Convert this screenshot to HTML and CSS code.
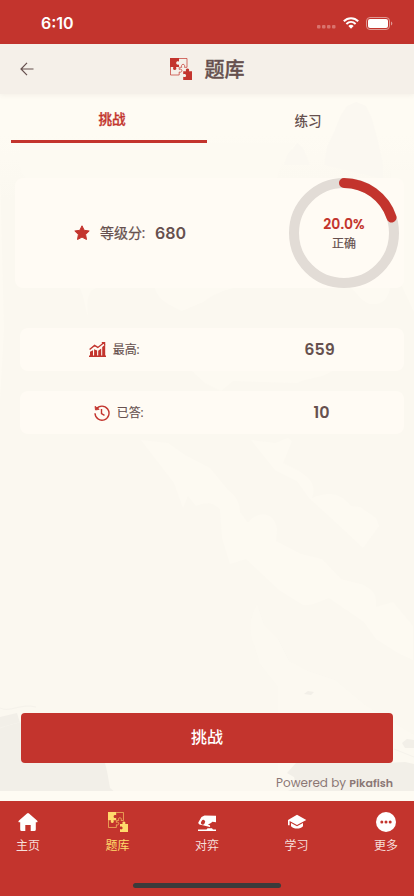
FILE: index.html
```html
<!DOCTYPE html>
<html lang="zh-CN">
<head>
    <meta charset="utf-8">
    <meta name="viewport" content="width=device-width, initial-scale=1">
    <title>题库</title>
    <link rel="stylesheet" href="styles.css">
</head>
<body>
    <!-- Shared icon shapes -->
    <svg class="symbols" width="0" height="0">
        <symbol id="puzzle" viewBox="0 0 22 22">
            <path d="M9 .5h8v8.800h-2.600c.5-1.300.3-3-1.300-3s-1.900 1.700-1.300 3H9.500M.5 9v8h8.700v-3c1.400.6 2.700 0 2.700-1.400s-1.500-1.900-2.700-1.200V9.300" fill="none" stroke="currentColor" stroke-width=".7"/>
            <path d="M0 0h9v3.700C7.700 2.900 6.200 3.500 6.200 5S7.700 7.100 9 6.400V9H6c.9 1.700.1 3-1.300 3s-2.200-1.300-1.300-3H0z" fill="currentColor"/>
            <path d="M13.200 13.300h2.900c-.8-1.600.1-2.800 1.400-2.800s2.200 1.200 1.400 2.800H22V22h-8.800v-3.200c1.600.8 2.900 0 2.900-1.300s-1.300-2.100-2.900-1.300z" fill="currentColor"/>
        </symbol>
    </svg>

    <div class="app">
        <!-- Landscape behind the page -->
        <svg class="scenery" viewBox="0 0 414 706" preserveAspectRatio="none">
            <defs>
                <linearGradient id="mist" x1="0" y1="0" x2="0" y2="1">
                    <stop offset="0" stop-color="#fbf8f0" stop-opacity="0"/>
                    <stop offset=".1" stop-color="#fbf8f0"/>
                    <stop offset="1" stop-color="#fbf8f0"/>
                </linearGradient>
            </defs>
            <rect y="50" width="414" height="656" fill="url(#mist)"/>
            <path d="M324 80l3-18 8-17 6-15 6-9 9-4 10 4 6 13 6 22 5 24v14zM284 80l4-12 5-4 4-6 6 5 7 17z" fill="#fbf8f1"/>
            <g fill="#fdfaf2">
                <path d="M20 58h275l-13 20-5 15H26q-6-5-6-12zM80 203h16c-10 3-9 18-8 30l-5-22zM155 203h78c-11 3-19 6-30 14l-21 9-10-5c-9-5-14-8-17-18zM351 203h39c-3 12-7 17-20 16-9-3-11-9-19-16z"/>
                <path d="M192 286h140c-11 8-24 6-35 12l-64-2-12 10-16-8zM141 355l27 3 17 12 25 13 18 22c9 6 12 15 12 22l8 11c10-14 27-11 29 6l-1 12 25 13 21 5 19 20 20 5c17 7 15 16 15 23l17-5 20 24v34l-15-7-22-14-12-17-35-24c-9 3-16 8-26 7l-24-15-33-31-16 5-8-26-2-29c-8-7-14-7-24-3l-8-10-5 12-9-25z"/>
                <path d="M251 355l24 3 13-5 4 3-9 22 16 8c13 8 17 15 13 27 18-7 28-5 39 8l9 1 16 11 3 8-16 22-19-18-13-12-22-20-12-17-22-11z"/>
                <path d="M390 85l9 49 1 63 14 30V85zM0 85l4 160-4 70z"/>
                <path d="M251 550c-2-14 2-22 6-31l7 21 14 14 11 22 19 10 27 9 30 25 49 30v50H278v-98l-18-23z" opacity=".45"/>
            </g>
            <g fill="#f2efe8">
                <path d="M0 632l17-4 3 10 10 6-4 16 12 1 15 12 52 5 2 8 3 17 7 6 8 7-8 6H0z"/>
                <path d="M304 609l4-3 6 1-3 3zM296 678h89l20-1 9 2v27H310l-9 2-13-2 8-4-2-10-7-4zM402 658l5-4 7 1v8h-9z"/>
            </g>
            <path d="M0 643c15-5 19-5 40-11M0 623c10 5 20-5 36-1M394 664l20 8" fill="none" stroke="#f5f2eb"/>
        </svg>

        <div class="status-bar">
            <span class="time">6:10</span>
            <div class="status-icons">
                <svg width="19" height="4" viewBox="0 0 19 4" fill="#d9736d"><rect width="3.500" height="3.500" rx="1"/><rect x="5" width="3.500" height="3.500" rx="1"/><rect x="10" width="3.500" height="3.500" rx="1"/><rect x="15" width="3.500" height="3.500" rx="1"/></svg>
                <svg class="wifi" width="16" height="12" viewBox="0 0 16 12" fill="none" stroke="#fff" stroke-width="2"><path d="M.8 4.300C4.800.2 11.200.2 15.200 4.300M3.400 7c2.700-2.600 6.500-2.600 9.200 0"/><path d="M5.400 8.900c1.500-1.400 3.700-1.400 5.200 0L8 11.700z" fill="#fff" stroke="none"/></svg>
                <svg width="27" height="13" viewBox="0 0 27 13"><rect x=".5" y=".5" width="23" height="12" rx="3.500" fill="none" stroke="#df9993"/><rect x="2" y="2" width="20" height="9" rx="2" fill="#fff"/><path d="M25 4.500c1.800.7 1.800 3.300 0 4z" fill="#df9993"/></svg>
            </div>
        </div>

        <header class="header">
            <svg class="back" width="14" height="14" viewBox="0 0 14 14" fill="none" stroke="currentColor" stroke-width="1.200"><path d="M13.500 7H1M7 .8L1 7l6 6.200"/></svg>
            <div class="title">
                <svg class="title-icon" width="22" height="22"><use href="#puzzle"/></svg>
                <h1>题库</h1>
            </div>
        </header>

        <div class="tabs">
            <div class="tab active">挑战</div>
            <div class="tab">练习</div>
        </div>

        <main>
            <section class="rating-card">
                <div class="rating">
                    <svg width="16" height="16" viewBox="0 0 16 16" fill="#c3342d"><path d="M8 .8l2.200 4.500 5 .7-3.600 3.500.9 5L8 12.100l-4.500 2.400.9-5L.8 6l5-.7z" stroke="#c3342d" stroke-linejoin="round"/></svg>
                    <span class="rating-label">等级分:</span>
                    <span class="rating-value">680</span>
                </div>
                <div class="progress">
                    <svg viewBox="0 0 110 110" fill="none" stroke-width="10">
                        <circle cx="55" cy="55" r="50" stroke="#e2dcd6"/>
                        <path d="M55 5a50 50 0 0 1 47.550 34.550" stroke="#c3342d" stroke-linecap="round"/>
                    </svg>
                    <div class="progress-text">
                        <strong>20.0%</strong>
                        <span>正确</span>
                    </div>
                </div>
            </section>

            <div class="stat">
                <div class="stat-label">
                    <svg width="17" height="15" viewBox="0 0 17 15"><path d="M0 13.500h17V15H0zM1 9.800l3-1.500v6H1zM5.100 7.300l3 1.200v5.800h-3zM9.200 8.800l3-2.300v7.800h-3zM13.200 5l3-2.500v11.700h-3z" fill="#c3342d"/><path d="M.6 7.600l5-4.200 3.200 2L15 .8M12.800.6h2.800v2.600" fill="none" stroke="#c3342d" stroke-width="1.300"/></svg>
                    <span>最高:</span>
                </div>
                <div class="stat-value">659</div>
            </div>
            <div class="stat answered">
                <div class="stat-label">
                    <svg width="16" height="16" viewBox="0 0 16 16" fill="none" stroke="#c3342d" stroke-width="1.400"><path d="M2.300 4.100A7 7 0 1 1 1 8.300M7.500 4v4.600l3 1.700"/><path d="M1 1.300l.5 3.700 3.700-.7z" fill="#c3342d" stroke-width=".8"/></svg>
                    <span>已答:</span>
                </div>
                <div class="stat-value">10</div>
            </div>
        </main>

        <div class="actions">
            <button class="challenge">挑战</button>
            <div class="powered"><span>Powered by</span> <b>Pikafish</b></div>
        </div>

        <nav class="nav">
            <div class="nav-item">
                <svg width="20" height="20" viewBox="0 0 20 20" fill="currentColor"><path d="M9 1.400q1-.8 2 0l8 7c1 .9.700 1.800-.4 1.800h-.8v7.300q0 1.500-1.500 1.500h-3.600v-6H7.300v6H3.700q-1.500 0-1.500-1.500v-7.300h-.8C.3 10.200 0 9.300 1 8.400z"/></svg>
                <span>主页</span>
            </div>
            <div class="nav-item selected">
                <svg width="20" height="20"><use href="#puzzle"/></svg>
                <span>题库</span>
            </div>
            <div class="nav-item">
                <svg width="20" height="20" viewBox="0 0 20 20" fill="currentColor"><path d="M1 17.600h8.500l1-1.400h4.500l1 1.400h3V19H1z"/><path d="M1.300 10.500L4.500 5l3-1.500L19 3.700v6.500l-3.600-.4c-1.500 1.700-3 2.200-4.600 2.400 2.400 1 2.800 1.500 2.100 2.800l-5-1.200-3.300-.7C2.400 13 1.300 12 1.300 10.500z"/><ellipse cx="6" cy="10.300" rx="1.900" ry="2.500" transform="rotate(35 6 10.300)" class="cutout"/></svg>
                <span>对弈</span>
            </div>
            <div class="nav-item">
                <svg width="20" height="20" viewBox="0 0 20 20" fill="currentColor"><path d="M10 2.800l9.300 5.100L10 13 2.600 8.900v4.300H1V7.900z"/><path d="M4 11l6 3.300 6-3.300v3.200c-2.600 3.200-9.400 3.200-12 0z"/></svg>
                <span>学习</span>
            </div>
            <div class="nav-item">
                <svg width="20" height="20" viewBox="0 0 20 20"><circle cx="10" cy="10" r="10" fill="currentColor"/><g class="cutout"><circle cx="5.800" cy="10" r="1.500"/><circle cx="10" cy="10" r="1.500"/><circle cx="14.200" cy="10" r="1.500"/></g></svg>
                <span>更多</span>
            </div>
        </nav>
        <div class="home-indicator"></div>
    </div>
</body>
</html>
```
FILE: styles.css
```css
* {
    box-sizing: border-box;
}
body {
    margin: 0;
    font-family: Poppins, Inter, "Noto Sans CJK SC", sans-serif;
    color: #66504e;
    background-color: #fefbf3;
}
svg {
    display: block;
    flex-shrink: 0;
}
.symbols {
    position: absolute;
}
.app {
    position: relative;
    display: flex;
    flex-direction: column;
    height: 896px;
    overflow: hidden;
    isolation: isolate;
}
.scenery {
    position: absolute;
    top: 85px;
    left: 0;
    width: 100%;
    height: 706px;
    z-index: -1;
}
.status-bar {
    display: flex;
    justify-content: space-between;
    height: 44px;
    padding: 12px 21px 0 41px;
    background-color: #c3342d;
    color: #fff;
}
.time {
    font-family: Inter, sans-serif;
    font-size: 16px;
    line-height: 22px;
    font-weight: 600;
}
.status-icons {
    display: flex;
    align-items: center;
    height: 22px;
}
.status-icons svg:first-child {
    margin-top: 8px;
}
.wifi {
    margin: 0 7px;
}
.header {
    display: flex;
    align-items: center;
    height: 50px;
    padding: 0 20px;
    background-color: #f5f0e9;
    box-shadow: 0 1px 5px rgba(102, 80, 78, 0.07);
}
.title {
    display: flex;
    flex: 1;
    justify-content: center;
    align-items: center;
    gap: 13px;
    padding-right: 14px;
}
.title-icon {
    color: #c3342d;
}
.cutout {
    fill: #c3342d;
}
h1 {
    margin: 2px 0 0;
    font-size: 20px;
    line-height: 30px;
    font-weight: 500;
    -webkit-text-stroke: 0.35px;
}
.tabs {
    display: flex;
    height: 49px;
    padding: 0 11px;
}
.tab {
    flex: 1;
    padding: 4px 0 0 6px;
    text-align: center;
    font-size: 13.6px;
    line-height: 48px;
    font-weight: 500;
}
.tab.active {
    padding-top: 2px;
    border-bottom: 3px solid #c3342d;
    color: #c3342d;
    -webkit-text-stroke: 0.3px;
}
main {
    display: flex;
    flex-direction: column;
    gap: 20px;
    padding: 35px 10px 0 15px;
}
.rating-card {
    display: flex;
    height: 110px;
    margin-bottom: 20px;
    border-radius: 8px;
    background-color: #fffbf4;
}
.rating {
    display: flex;
    align-items: center;
    width: 274px;
    padding-left: 59px;
    font-size: 14px;
}
.rating-label {
    margin-left: 10px;
    font-weight: 400;
    -webkit-text-stroke: 0.25px;
}
.rating-value {
    margin-left: 10px;
    font-family: Inter, sans-serif;
    font-size: 16px;
    font-weight: 600;
}
.progress {
    display: grid;
    width: 110px;
    height: 110px;
}
.progress > * {
    grid-area: 1 / 1;
}
.progress-text {
    display: flex;
    flex-direction: column;
    justify-content: center;
    align-items: center;
    padding-top: 2px;
    font-size: 12px;
    line-height: 20px;
}
.progress-text strong {
    color: #c3342d;
    font-size: 14px;
    font-weight: 600;
}
.progress-text span {
    -webkit-text-stroke: 0.2px;
}
.stat {
    display: flex;
    align-items: center;
    height: 43px;
    margin: 0 0 0 5px;
    border-radius: 8px;
    background-color: #fffbf4;
}
.stat-label, .stat-value {
    width: 50%;
}
.stat-label {
    display: flex;
    justify-content: center;
    align-items: center;
    gap: 7px;
    padding-right: 4px;
    font-size: 12px;
    -webkit-text-stroke: 0.15px;
}
.answered .stat-label {
    padding: 0 0 0 5px;
}
.stat-value {
    padding-left: 23px;
    text-align: center;
    font-size: 16px;
    font-weight: 600;
}
.answered .stat-value {
    padding-left: 27px;
}
.actions {
    margin-top: auto;
    padding: 0 21px 8px;
}
.challenge {
    width: 100%;
    height: 50px;
    padding: 0 0 2px;
    border: none;
    border-radius: 4px;
    background-color: #c3342d;
    color: #fff;
    font-family: inherit;
    font-size: 16px;
    font-weight: 500;
}
.powered {
    margin-top: 10px;
    text-align: right;
    font-size: 12px;
    line-height: 20px;
    color: #8b7775;
}
.powered b {
    font-size: 11px;
    font-weight: 600;
}
.nav {
    display: flex;
    justify-content: space-between;
    height: 95px;
    padding-top: 11px;
    background-color: #c3342d;
    color: #fff;
}
.nav-item {
    display: flex;
    flex-direction: column;
    align-items: center;
    width: 56px;
    gap: 4px;
    font-size: 12px;
    line-height: 20px;
}
.nav-item span {
    color: #f6dfda;
}
.nav-item.selected, .nav-item.selected span {
    color: #ffda6c;
}
.home-indicator {
    position: absolute;
    bottom: 8px;
    left: 133px;
    width: 148px;
    height: 5px;
    border-radius: 3px;
    background-color: #3c3b3b;
}
```
